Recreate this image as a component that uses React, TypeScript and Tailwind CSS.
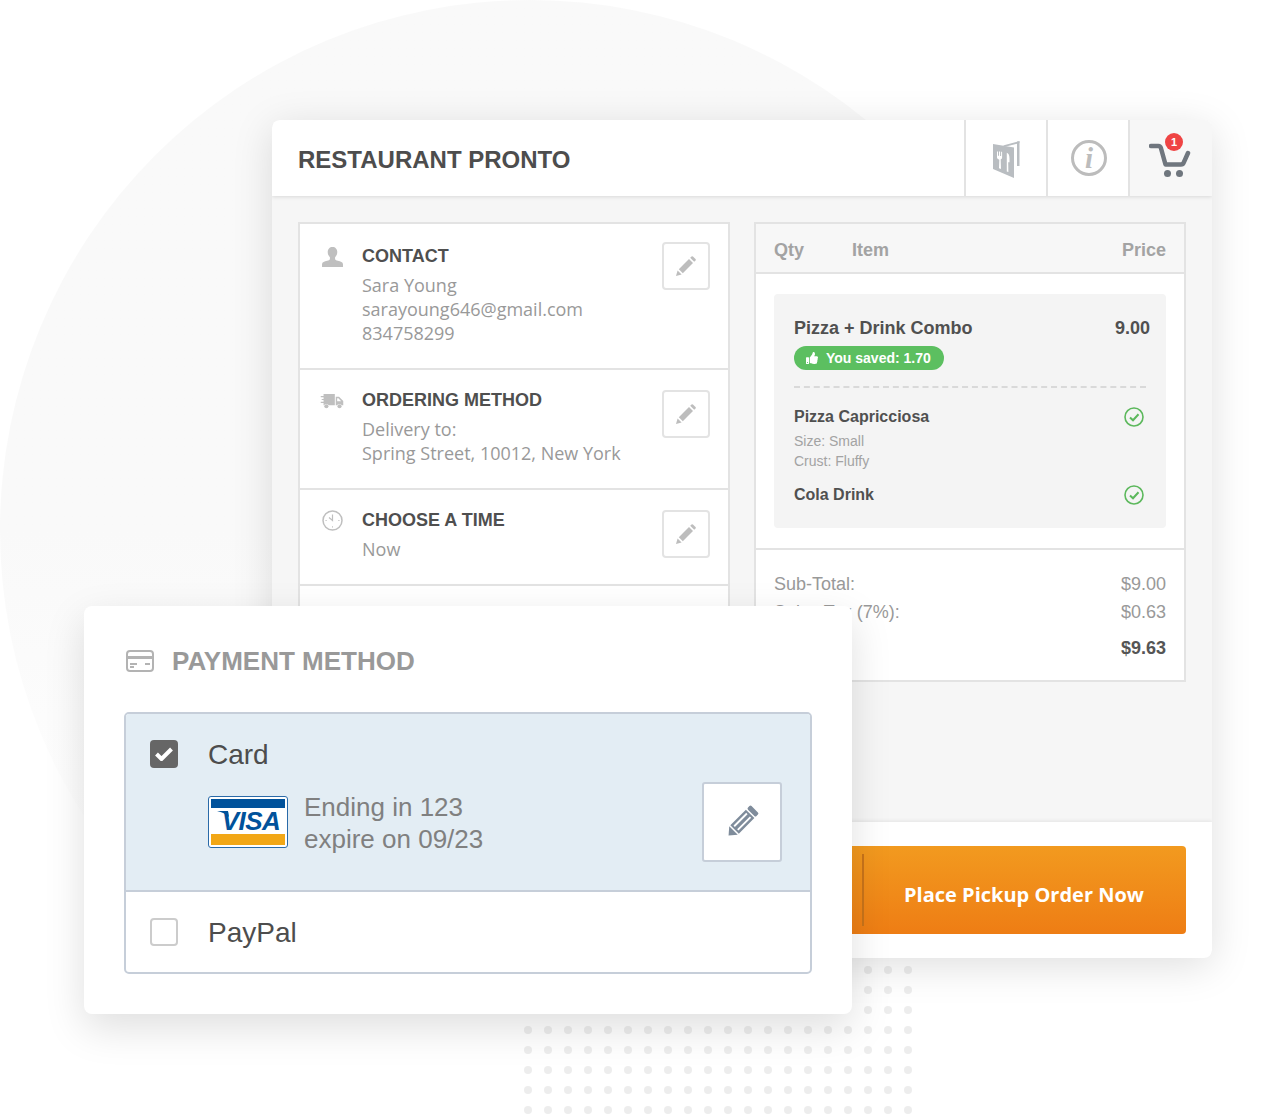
import { FaThumbsUp } from 'react-icons/fa';

// Restaurant checkout mockup: order window + payment card lying over it.

const sans = "font-['Liberation_Sans',Arial,sans-serif]";
const open = "font-['Open_Sans',sans-serif]";

function SmallPencil() {
  return (
    <svg width="20" height="20" viewBox="0 0 20 20" fill="#bdbdbd">
      <path d="M0 20l1.600-5.600 4 4z" />
      <path d="M2.800 13.200L13 3l4 4L6.800 17.200z" />
      <path d="M14.200 1.800l1.300-1.300a1 1 0 0 1 1.400 0l2.600 2.600a1 1 0 0 1 0 1.400l-1.300 1.300z" />
    </svg>
  );
}

function EditButton() {
  return (
    <button className="flex h-12 w-12 shrink-0 items-center justify-center rounded-[4px] border-2 border-[#e3e3e3] bg-white">
      <SmallPencil />
    </button>
  );
}

function PersonIcon() {
  return (
    <svg className="mt-[5px]" width="21" height="20" viewBox="0 0 22 21" fill="#bfbfbf">
      <path d="M11 0c3 0 5 2.200 5 5.200 0 2.400-1 4.400-2.300 5.600v1.700c0 .9 1 1.400 3 2 2.700.8 5.300 1.500 5.300 3.500V21H0v-3c0-2 2.600-2.700 5.300-3.500 2-.6 3-1.100 3-2v-1.700C7 9.600 6 7.600 6 5.200 6 2.200 8 0 11 0z" />
    </svg>
  );
}

function TruckIcon() {
  return (
    <svg className="mt-[4px]" width="24" height="15" viewBox="0 0 24 16" fill="#bfbfbf">
      <path d="M3 0h12v12H8.500a3 3 0 0 0-5 0H3v-2.500H0V8.300h3V6.500H1V5.300h2V3.500H0V2.200h3z" />
      <path d="M16 3h3.500l4.500 4.500V12h-1.600a3 3 0 0 0-5 0H16zm1.500 1.500v3.300h4.300l-3-3.300z" />
      <circle cx="6" cy="13" r="2.200" />
      <circle cx="20" cy="13" r="2.200" />
    </svg>
  );
}

function ClockIcon() {
  return (
    <svg width="21" height="21" viewBox="0 0 21 21" fill="none" stroke="#bfbfbf">
      <circle cx="10.500" cy="10.500" r="9.500" strokeWidth="1.500" />
      <path d="M10.500 4.500v6l-3.500-3" strokeWidth="1.200" />
      <path d="M3.500 10.500h1.200M16.300 10.500h1.200M10.500 16.300v1.200" strokeWidth="1" />
    </svg>
  );
}

function MenuIcon() {
  return (
    <svg width="27" height="38" viewBox="0 0 27 38" fill="#b9bdc1">
      <path d="M0 4l21 3.500V38L0 29z" />
      <path d="M10 5.500L26.500 1v2L13 6.500z" />
      <path d="M24 1.500h2.500V26H24z" />
      <path
        d="M4 11.500h1v4.300h1v-4.200h1.100v4.300h1v-4.100h1v5.800c0 1-.6 1.600-1.400 1.800L8 29l-2-.8.300-8.500C5 19.400 4 18.700 4 17.600zM13.800 12.800c1.700.5 2.700 2.500 2.700 5.700v3.800h-1.300l.2 9.700-1.600-.6z"
        fill="#fff"
      />
    </svg>
  );
}

function InfoIcon() {
  return (
    <div className="flex h-9 w-9 items-center justify-center rounded-full border-[3.500px] border-[#bcbcbc]">
      <span className="font-['Liberation_Serif',serif] text-[29px] leading-none font-bold text-[#bcbcbc] italic">
        i
      </span>
    </div>
  );
}

function CartIcon() {
  return (
    <svg width="42" height="36" viewBox="0 0 42 36" fill="none" stroke="#6f767e" strokeWidth="4.500" strokeLinecap="round" strokeLinejoin="round">
      <path d="M2 4h7.500c1.400 0 2 .8 2.400 2l4.600 16.500h15.500c1.400 0 2.200-.6 2.700-1.800L39 11" />
      <circle cx="18.500" cy="31.500" r="3.500" fill="#6f767e" stroke="none" />
      <circle cx="30.500" cy="31.500" r="3.500" fill="#6f767e" stroke="none" />
    </svg>
  );
}

function GreenCheck() {
  return (
    <svg width="20" height="20" viewBox="0 0 20 20" fill="none" stroke="#5cb85c">
      <circle cx="10" cy="10" r="9" strokeWidth="1.600" />
      <path d="M6 10.500l3 2.800 5.500-6" strokeWidth="2" />
    </svg>
  );
}

function Dots() {
  const rows = [1030, 1050, 1070, 1090, 1110];
  const cols = Array.from({ length: 20 }, (_, i) => 528 + i * 20);
  return (
    <svg className="absolute top-0 left-0" width="1272" height="1114" fill="#ededed">
      {rows.map((y) => cols.map((x) => <circle key={`${x}-${y}`} cx={x} cy={y} r="4" />))}
      {[970, 990, 1010].map((y) =>
        [868, 888, 908].map((x) => <circle key={`${x}-${y}`} cx={x} cy={y} r="4" />)
      )}
    </svg>
  );
}

function InfoRow({
  icon,
  title,
  lines,
  className,
  textClass,
}: {
  icon: React.ReactNode;
  title: string;
  lines: string[];
  className: string;
  textClass?: string;
}) {
  return (
    <div className={`flex border-b-2 border-[#e3e3e3] pr-[18px] ${className}`}>
      <div className="flex w-[62px] shrink-0 justify-center pl-[2px]">{icon}</div>
      <div className={`flex-1 ${textClass ?? ''}`}>
        <div className={`${sans} text-[18px] leading-[28px] font-bold text-[#4f4f4f]`}>{title}</div>
        <div className={`${open} mt-[3px] text-[18px] leading-[24px] text-[#999]`}>
          {lines.map((l) => (
            <div key={l}>{l}</div>
          ))}
        </div>
      </div>
      <EditButton />
    </div>
  );
}

function TotalRow({ label, value, bold }: { label: string; value: string; bold?: boolean }) {
  return (
    <div className={`flex h-7 items-center justify-between ${bold ? 'font-bold text-[#555]' : 'text-[#999]'}`}>
      <span>{label}</span>
      <span>{value}</span>
    </div>
  );
}

function OrderWindow() {
  return (
    <div className="absolute top-[120px] left-[272px] flex h-[838px] w-[940px] flex-col overflow-hidden rounded-[8px] bg-[#f6f6f6] shadow-[0_8px_40px_rgba(0,0,0,0.13)]">
      <header className="flex h-[76px] shrink-0 items-center bg-white shadow-[0_1px_4px_rgba(0,0,0,0.12)]">
        <h1 className={`${sans} flex-1 pt-1 pl-[26px] text-[24px] font-bold text-[#4d4d4d]`}>RESTAURANT PRONTO</h1>
        <div className="flex h-full w-[82px] items-center justify-center border-l-2 border-[#e3e3e3] pt-[2px]">
          <MenuIcon />
        </div>
        <div className="flex h-full w-[82px] items-center justify-center border-l-2 border-[#e3e3e3] pl-[2px]">
          <InfoIcon />
        </div>
        <div className="relative flex h-full w-[84px] items-center justify-center border-l-2 border-[#e3e3e3] bg-[#f7f7f7] pt-[4px] pr-[2px]">
          <CartIcon />
          <span className={`${sans} absolute top-[13px] left-[35px] flex h-[18px] w-[18px] items-center justify-center rounded-full bg-[#ef4444] text-[11px] font-bold text-white`}>
            1
          </span>
        </div>
      </header>

      <div className="flex h-[626px] shrink-0 items-start gap-6 px-[26px] pt-[26px]">
        <section className="h-[480px] w-[432px] border-2 border-[#e3e3e3] bg-white">
          <InfoRow
            className="h-[146px] pt-[18px]"
            icon={<PersonIcon />}
            title="CONTACT"
            lines={['Sara Young', 'sarayoung646@gmail.com', '834758299']}
          />
          <InfoRow
            className="h-[120px] pt-5"
            textClass="-mt-1"
            icon={<TruckIcon />}
            title="ORDERING METHOD"
            lines={['Delivery to:', 'Spring Street, 10012, New York']}
          />
          <InfoRow
            className="h-[96px] pt-5"
            textClass="-mt-1"
            icon={<ClockIcon />}
            title="CHOOSE A TIME"
            lines={['Now']}
          />
        </section>

        <section className={`${sans} h-[460px] w-[432px] border-2 border-[#e3e3e3] bg-white`}>
          <div className="flex h-[50px] items-center border-b-2 border-[#e3e3e3] bg-[#f7f7f7] px-[18px] pt-1 text-[18px] font-bold text-[#a3a3a3]">
            <span className="w-[78px]">Qty</span>
            <span className="flex-1">Item</span>
            <span>Price</span>
          </div>
          <div className="h-[276px] border-b-2 border-[#e3e3e3] px-[18px] pt-[20px]">
            <div className="h-[234px] rounded-[4px] bg-[#f4f4f4] px-5 pt-[20px] text-[#505050]">
              <div className="flex items-center justify-between text-[18px] leading-[28px] font-bold">
                <span>Pizza + Drink Combo</span>
                <span className="-mr-1">9.00</span>
              </div>
              <div className="mt-[4px] flex h-6 w-[150px] items-center rounded-full bg-[#5cbf60] pl-3 text-[14px] font-bold text-white">
                <FaThumbsUp className="mr-[8px] text-[12px]" />
                You saved: 1.70
              </div>
              <div className="mt-[16px] border-t-2 border-dashed border-[#d9d9d9]" />
              <div className="mt-[18px] flex items-center justify-between pr-[2px] text-[16px] leading-[22px] font-bold">
                <span>Pizza Capricciosa</span>
                <GreenCheck />
              </div>
              <div className="mt-[3px] text-[14px] leading-[20px] text-[#a3a3a3]">
                <div>Size: Small</div>
                <div>Crust: Fluffy</div>
              </div>
              <div className="mt-[13px] flex items-center justify-between pr-[2px] text-[16px] leading-[22px] font-bold">
                <span>Cola Drink</span>
                <GreenCheck />
              </div>
            </div>
          </div>
          <div className="px-[18px] pt-[20px] text-[18px]">
            <TotalRow label="Sub-Total:" value="$9.00" />
            <TotalRow label="Sales Tax (7%):" value="$0.63" />
            <div className="mt-[8px]">
              <TotalRow label="Total:" value="$9.63" bold />
            </div>
          </div>
        </section>
      </div>

      <footer className="flex flex-1 items-center justify-end bg-white px-[26px] shadow-[0_-1px_4px_rgba(0,0,0,0.08)]">
        <button className="relative flex h-[88px] w-[600px] items-center justify-center rounded-[4px] bg-gradient-to-b from-[#f29a1f] to-[#ee7d14] pt-[10px] pl-[276px] text-white">
          <span className="absolute top-[8px] bottom-[8px] left-[276px] w-[2px] bg-[#c9741a]" />
          <span className={`${open} text-[20px] font-bold`}>Place Pickup Order Now</span>
        </button>
      </footer>
    </div>
  );
}

function VisaCard() {
  return (
    <div className="relative flex h-[52px] w-20 shrink-0 flex-col rounded-[3px] border border-[#2a6aa8] bg-white p-[2px]">
      <div className="h-[10px] bg-[#00529b]" />
      <div className="flex flex-1 items-center justify-center pl-[6px]">
        <span className={`${sans} text-[26px] leading-none font-bold tracking-[-0.500px] text-[#00529b] italic`}>VISA</span>
      </div>
      <div className="h-[12px] bg-[#f2a716]" />
      <svg className="absolute top-[14px] left-[8px]" width="12" height="7" viewBox="0 0 12 7" fill="#00529b">
        <path d="M0 0h11l1 6C9 3 5 1 0 0z" />
      </svg>
    </div>
  );
}

function LargePencil() {
  return (
    <svg className="overflow-visible" width="30" height="30" viewBox="0 0 30 30" fill="#7f8c9b">
      <g transform="rotate(45 15 15)">
        <rect x="9" y="-3" width="12" height="5" rx="1.500" />
        <path d="M9 3.500h12v22H9zM11.500 5.500v18h1.900v-18zM16.600 5.500v18h1.900v-18z" fillRule="evenodd" />
        <path d="M9 27h12l-6 7z" />
      </g>
    </svg>
  );
}

function PaymentCard() {
  return (
    <div className="absolute top-[606px] left-[84px] h-[408px] w-[768px] rounded-[8px] bg-white px-10 pt-[38px] shadow-[0_14px_40px_rgba(0,0,0,0.13)]">
      <div className="flex h-[34px] items-center gap-[18px] pl-[2px]">
        <svg width="28" height="22" viewBox="0 0 28 22" fill="none" stroke="#b3b3b3" strokeWidth="2">
          <rect x="1" y="1" width="26" height="20" rx="3" />
          <path d="M1 7.500h26" strokeWidth="3" />
          <path d="M4 14h7M4 17h4M19 14h5" />
        </svg>
        <h2 className={`${sans} text-[26px] font-bold text-[#999]`}>PAYMENT METHOD</h2>
      </div>

      <div className="mt-[34px] overflow-hidden rounded-[5px] border-2 border-[#c6ced9]">
        <div className="flex h-[178px] border-b-2 border-[#c6ced9] bg-[#e3edf4] pt-[26px] pl-6">
          <div className="flex h-[28px] w-[28px] shrink-0 items-center justify-center rounded-[4px] bg-[#666]">
            <svg width="18" height="14" viewBox="0 0 18 14" fill="none" stroke="#fff" strokeWidth="4">
              <path d="M1.500 7l5 5L16.500 2" />
            </svg>
          </div>
          <div className="ml-[30px] flex-1">
            <div className={`${sans} text-[28px] leading-[30px] text-[#4d4d4d]`}>Card</div>
            <div className="mt-[12px] flex items-center pr-7">
              <VisaCard />
              <div className={`${sans} ml-4 flex-1 pt-[2px] text-[26px] leading-[32px] text-[#808080]`}>
                <div>Ending in 123</div>
                <div>expire on 09/23</div>
              </div>
              <button className="flex h-20 w-20 items-center justify-center rounded-[3px] border-2 border-[#c6ced9] bg-white">
                <LargePencil />
              </button>
            </div>
          </div>
        </div>
        <div className="flex h-[80px] items-center pl-6">
          <div className="h-[28px] w-[28px] rounded-[4px] border-2 border-[#ccc] bg-white" />
          <span className={`${sans} ml-[30px] pt-[2px] text-[28px] text-[#4d4d4d]`}>PayPal</span>
        </div>
      </div>
    </div>
  );
}

export default function App() {
  return (
    <div className="relative h-[1114px] w-[1272px] overflow-hidden bg-white">
      <div className="absolute top-0 left-0 h-[1060px] w-[1060px] rounded-full bg-gradient-to-b from-[#f9f9f9] from-50% to-white to-85%" />
      <Dots />
      <OrderWindow />
      <PaymentCard />
    </div>
  );
}
